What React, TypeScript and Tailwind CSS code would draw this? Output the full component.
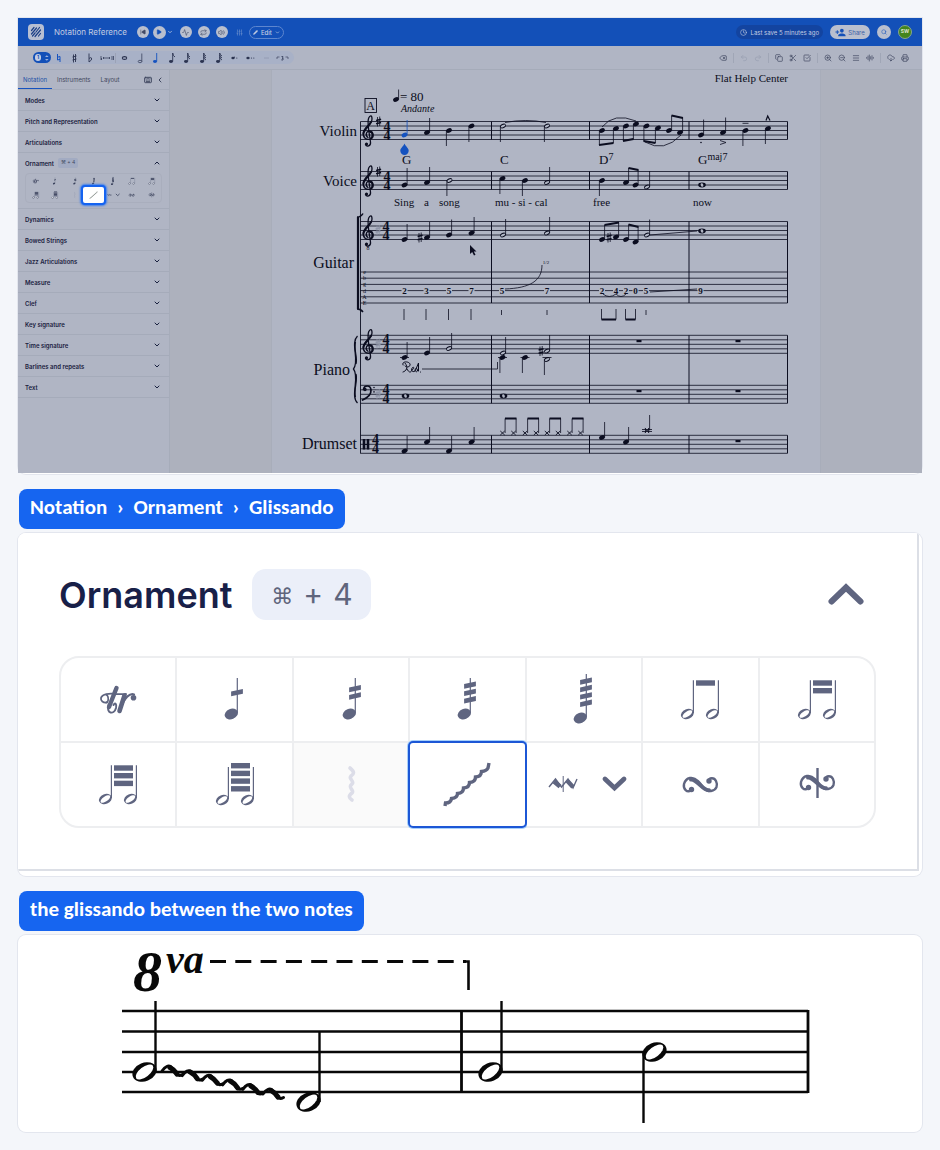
import React from "react";
import {
  Activity, AudioLines, CheckSquare, ChevronDown, ChevronLeft, ChevronUp, Clock, CloudDownload, Copy, Delete, Keyboard,
  Menu, Pencil, Play, Printer, Redo2, Repeat, Scissors, Search, SkipBack, SlidersVertical, Undo2, Volume2, ZoomIn, ZoomOut,
} from "lucide-react";
import { MdPersonAddAlt1 } from "react-icons/md";

const INK = "#0b0d20";

/* ---------- ornament icons, drawn around the centre of a 116 x 84 cell ---------- */

function Stemmed({ dx = 0, slashes, top = -21, headY = 15 }: { dx?: number; slashes: number[]; top?: number; headY?: number }) {
  return (
    <g>
      <ellipse cx={-3.7 + dx} cy={headY} rx="6.8" ry="5.1" transform={`rotate(-22 ${-3.7 + dx} ${headY})`} />
      <path d={`M${2.3 + dx} ${top}V${headY - 1}`} stroke="currentColor" strokeWidth="1.2" />
      {slashes.map((y) => (
        <path key={y} d={`M${-3.9 + dx} ${y - 1}l11.8 -2.6v4.8l-11.8 2.6z`} />
      ))}
    </g>
  );
}

function Beamed({ count, top = -18.7, headY = 15, stemTop = -18.7 }: { count: number; top?: number; headY?: number; stemTop?: number }) {
  return (
    <g>
      {[-12.6, 12.4].map((x) => (
        <g key={x}>
          <ellipse cx={x} cy={headY} rx="6.6" ry="4.9" transform={`rotate(-22 ${x} ${headY})`} />
          <ellipse cx={x} cy={headY} rx="5.6" ry="2.5" fill="#fff" transform={`rotate(-34 ${x} ${headY})`} />
          <path d={`M${x + 6} ${stemTop}V${headY - 1}`} stroke="currentColor" strokeWidth="1.2" />
        </g>
      ))}
      {Array.from({ length: count }, (_, i) => (
        <rect key={i} x="-4" y={top + i * 7.7} width="19" height="5.4" />
      ))}
    </g>
  );
}

const turn = (
  <g fill="none" stroke="currentColor" strokeLinecap="round">
    <path d="M-9 6.500C-13 9 -17 5 -16 0C-14 -7 -7 -8 -2 -3C3 2 5 8 11 7C17 6 18 1 16 -3C14 -7 9 -6 9 -3.500" strokeWidth="2.4" />
    <path d="M-9 -4.500C-3 -5 3 7 9 6.200" strokeWidth="4" />
    <circle cx="-8.500" cy="5.500" r="1.400" strokeWidth="2.600" />
    <circle cx="9" cy="-3" r="1.400" strokeWidth="2.600" />
  </g>
);

const ornaments: { name: string; art: React.ReactNode }[] = [
  {
    name: "Trill",
    art: (
      <g fill="none" stroke="currentColor" strokeLinecap="round" strokeLinejoin="round">
        <path d="M-1.500 -11L-9 8" strokeWidth="4.400" />
        <path d="M-9.500 6C-12 15 -4 16 -2 9C-1 5 -3 3 -4.500 6" strokeWidth="2" />
        <path d="M-11 3.500C-15 4 -17.500 2 -17 -1C-16 -5 -8 -6 -3 -5C2 -4.500 6 -5 8 -5" strokeWidth="1.800" />
        <path d="M-12 -4.500C-9 -3 -9 3 -12 3.500" strokeWidth="1.600" />
        <path d="M6.500 -3.500L1.500 12" strokeWidth="4.600" />
        <path d="M4 5C8 -2 12 -6 16 -4.500" strokeWidth="2.200" />
        <circle cx="15.500" cy="-1.200" r="2.800" fill="currentColor" stroke="none" />
      </g>
    ),
  },
  { name: "Tremolo", art: <Stemmed slashes={[-6.5]} /> },
  { name: "Double tremolo", art: <Stemmed dx={2} slashes={[-10.5, -3.1]} /> },
  { name: "Triple tremolo", art: <Stemmed slashes={[-14, -6.7, 0.7]} /> },
  { name: "Quadruple tremolo", art: <Stemmed slashes={[-18, -10.6, -3.2, 4.2]} top={-25} headY={19} /> },
  { name: "Tremolo between notes", art: <Beamed count={1} /> },
  { name: "Double tremolo between notes", art: <Beamed count={2} /> },
  { name: "Triple tremolo between notes", art: <Beamed count={3} /> },
  { name: "Quadruple tremolo between notes", art: <Beamed count={4} top={-21} headY={16} stemTop={-17} /> },
  {
    name: "Arpeggio",
    art: (
      <path
        d="M-1 -16C4 -12 3 -10 0 -8C-3 -5 4 -3 1 0C-4 4 4 6 1 9C-3 12 -2 14 1 16"
        fill="none" stroke="currentColor" strokeWidth="3.6" strokeLinecap="round"
      />
    ),
  },
  {
    name: "Glissando",
    art: (
      <path
        d="M-23 22L-22.500 19Q-17 19 -16.500 14.500Q-10.500 14 -10.500 9.500Q-4.500 9 -4.500 4Q1.500 3.500 1.500 -1.500Q7.500 -2 7.500 -7Q13.500 -7.500 13.500 -12.500Q18.500 -13 20 -16L21 -21"
        fill="none" stroke="currentColor" strokeWidth="3.4"
      />
    ),
  },
  {
    name: "Mordent",
    art: (
      <g>
        <path d="M-35 3L-28.500 -5L-22.500 3L-16 -5L-11 4L-7 -5" fill="none" stroke="currentColor" strokeWidth="1.4" />
        <path d="M-30 -2.500L-24 2.500M-17 -3.500L-11 3" fill="none" stroke="currentColor" strokeWidth="4.4" />
        <path d="M-20.800 -8V8" stroke="currentColor" strokeWidth="1" />
        <path d="M21 -5L30.500 4L40 -5" fill="none" stroke="currentColor" strokeWidth="4.8" strokeLinecap="round" />
      </g>
    ),
  },
  { name: "Turn", art: turn },
  { name: "Slashed turn", art: <g><g transform="translate(0 -2)">{turn}</g><path d="M.5 -16V14" stroke="currentColor" strokeWidth="2.4" /></g> },
];

function OrnamentArt({ art }: { art: React.ReactNode }) {
  return (
    <svg viewBox="-58 -42 116 84" className="h-full w-full" fill="currentColor" aria-hidden="true">
      {art}
    </svg>
  );
}

/* ---------- score drawing ---------- */

type Kind = "q" | "h" | "w" | "x";

function Note({ x, y, kind = "q", end, color = INK }: { x: number; y: number; kind?: Kind; end?: number; color?: string }) {
  const up = end !== undefined && end < y;
  const sx = up ? x + 2.6 : x - 2.6;
  return (
    <g>
      {kind === "x" ? (
        <path d={`M${x - 2.2} ${y - 2}l4.400 4M${x - 2.2} ${y + 2}l4.400 -4`} stroke={color} strokeWidth=".9" />
      ) : kind === "w" ? (
        <g>
          <ellipse cx={x} cy={y} rx="3.8" ry="2.4" fill={color} />
          <ellipse cx={x} cy={y} rx="1.300" ry="1.900" fill="#b0b5c4" transform={`rotate(-20 ${x} ${y})`} />
        </g>
      ) : (
        <g transform={`rotate(-24 ${x} ${y})`}>
          <ellipse cx={x} cy={y} rx="3" ry="2.2" fill={color} />
          {kind === "h" && <ellipse cx={x} cy={y} rx="2.400" ry="1" fill="#b0b5c4" />}
        </g>
      )}
      {end !== undefined && <path d={`M${sx} ${y}V${end}`} stroke={color} strokeWidth=".8" />}
    </g>
  );
}

function Clef({ y }: { y: number }) {
  return (
    <g transform={`translate(368.500 ${y})`} fill="none" stroke={INK} strokeLinecap="round">
      <path d="M-.5 2.500C-3.500 .5 -2.500 -3.800 1 -3.800C5 -3.800 6 2.500 2 4C-2 5.500 -6 2.500 -5.200 -2.500C-4.200 -8 3.500 -10 3.500 -16C3.500 -20 1.500 -20 .2 -17C-1 -14 -.5 -10 .2 -5L2 7C2.500 11.500 -2 12 -3 9.500" strokeWidth="1.3" />
      <path d="M-5 -1.500C-4.500 -6 .5 -9 2.500 -13M1.500 -3.300C4.500 -3 5 1.500 2.500 3.500" strokeWidth="2" />
      <circle cx="-2" cy="9" r="1.600" fill={INK} stroke="none" />
    </g>
  );
}

const Sharp = ({ x, y, faint = false }: { x: number; y: number; faint?: boolean }) => (
  <g stroke={faint ? "#8f95a8" : INK} strokeWidth=".8">
    <path d={`M${x - 1} ${y - 4.500}v9.500M${x + 1.200} ${y - 5}v9.500`} />
    <path d={`M${x - 2.400} ${y - 1}l5 -1.200M${x - 2.400} ${y + 2.200}l5 -1.200`} strokeWidth="1.500" />
  </g>
);

const TimeSig = ({ x, y }: { x: number; y: number }) => (
  <text y={y + 9} fill={INK} fontSize="14" fontWeight="700" textAnchor="middle">
    <tspan x={x}>4</tspan>
    <tspan x={x} dy="9">4</tspan>
  </text>
);

const Staff = ({ y, lines = 5, gap = 4.5 }: { y: number; lines?: number; gap?: number }) => (
  <path d={Array.from({ length: lines }, (_, i) => `M360.500 ${y + i * gap}H787.500`).join("")} stroke={INK} strokeWidth=".8" />
);

const bars = [491.5, 589.5, 689, 787.5];
const barSpans = [[121.5, 139.5], [171.5, 189.5], [221.5, 303], [335.3, 403.3], [435.3, 453.3]];
const notes: [number, number, Kind, number?][] = [
  [427, 132.5, "q", 118], [449, 130.5, "q", 146], [471.5, 126, "q", 142], [503, 126, "h", 142], [547, 126, "h", 142],
  [602, 130.5, "q", 145], [616, 128.5, "q", 143], [626, 126, "q", 141], [636, 124, "q", 139], [646.5, 126, "q", 141],
  [658, 128, "q", 143], [669, 130.5, "q", 115.5], [680, 132.5, "q", 118], [701, 135, "q", 119.5], [723, 132.5, "q", 117.5],
  [745.5, 130.5, "q", 146], [768, 128.5, "q", 144],
  [404.5, 185, "q", 168], [427, 182.5, "q", 167], [449.5, 180.5, "h", 196], [502.5, 178.5, "q", 194], [525, 180.5, "q", 196],
  [547, 182.5, "h", 167], [602, 180.5, "q", 196], [626, 182.5, "q", 168], [635.5, 185, "q", 170], [647, 187, "h", 171], [702, 185, "w"],
  [404.5, 239.5, "q", 224], [427, 237.5, "q", 222], [449, 235, "q", 219.5], [471.5, 233, "q", 217], [503, 235, "h", 219],
  [547, 233, "h", 217], [602, 239.5, "q", 225], [616, 237, "q", 222.5], [626, 239.5, "q", 224.5], [635.5, 242, "q", 227],
  [647, 235, "h", 219.5], [702, 231, "w"],
  [404.5, 357.5, "q", 342], [427, 353, "q", 337], [449, 348.5, "h", 333], [503, 353, "h", 337], [502.5, 357.5, "q", 373],
  [525, 357.5, "q", 373], [547, 351, "h", 335], [547, 359.5, "h", 375], [405.5, 396, "w"], [503.5, 396, "w"],
  [404.5, 451, "q", 436], [427, 442, "q", 427], [449, 451, "q", 436], [471.5, 442, "q", 427],
  [502.5, 433, "x", 418.5], [513.5, 433, "x", 418.5], [525, 433, "x", 418.5], [536, 433, "x", 418.5],
  [547, 433, "x", 418.5], [558, 433, "x", 418.5], [569.5, 433, "x", 418.5], [580.5, 433, "x", 418.5],
  [602, 437.5, "q", 422], [626, 442, "q", 427], [647, 430.5, "x", 415],
];
const frets: [number, string][] = [
  [404.5, "2"], [426.5, "3"], [449, "5"], [471.5, "7"], [502, "5"], [547, "7"],
  [602, "2"], [616, "4"], [626, "2"], [635.5, "0"], [646, "5"], [700.5, "9"],
];
const lyrics: [number, string][] = [[394, "Sing"], [424, "a"], [439, "song"], [495, "mu - si - cal"], [593, "free"], [693, "now"]];
const parts: [number, number, string][] = [[357, 136, "Violin"], [357, 186, "Voice"], [354, 268, "Guitar"], [350, 375, "Piano"], [357, 449, "Drumset"]];
const openStrings = ["e", "b", "g", "d", "A", "E"];

function Score() {
  return (
    <svg viewBox="272 70 548 403" className="block w-full font-['Liberation_Serif',serif]" fill={INK} role="img" aria-label="Score">
      <text x="788" y="82" fontSize="11" textAnchor="end">Flat Help Center</text>
      <rect x="365" y="98.500" width="11.500" height="14" fill="none" stroke={INK} strokeWidth=".9" />
      <text x="370.700" y="110" fontSize="12" textAnchor="middle">A</text>
      <Note x={396} y={99.5} end={89.5} />
      <text x="400" y="101" fontSize="13">= 80</text>
      <text x="401" y="112" fontSize="10" fontStyle="italic">Andante</text>
      {parts.map(([x, y, name], i) => (
        <text key={name} x={x} y={y} fontSize={i < 2 ? 15 : 16} textAnchor="end">{name}</text>
      ))}

      <Staff y={121.5} />
      <Staff y={171.5} />
      <Staff y={221.5} />
      <Staff y={272} lines={6} gap={6.2} />
      <Staff y={335.3} />
      <Staff y={385.3} />
      <Staff y={435.3} />
      <path d="M360.500 121.500V453.500" stroke={INK} strokeWidth=".9" />
      {bars.map((x) => (
        <path key={x} d={barSpans.map(([a, b]) => `M${x} ${a}V${b}`).join("")} stroke={INK} strokeWidth="1" />
      ))}

      <Clef y={135} />
      <Clef y={185} />
      <Clef y={235} />
      <Clef y={348.8} />
      <text x="368" y="250" fontSize="6" textAnchor="middle">8</text>
      <g fill="none" stroke={INK} strokeLinecap="round">
        <path d="M363.500 389.500C364 385 370.500 384.500 371 390C371.300 395 367 398 362.500 400" strokeWidth="1.700" />
        <circle cx="365" cy="389.500" r="1" strokeWidth="1.400" />
        <path d="M374 387.500v.1M374 391.800v.1" strokeWidth="1.500" />
      </g>
      <path d="M364 439v10.500M368 439v10.500" stroke={INK} strokeWidth="2.600" />
      <path d="M364 444.500h4" stroke={INK} strokeWidth="1" />
      <Sharp x={378.5} y={121.5} />
      <Sharp x={378.5} y={171.5} />
      <Sharp x={378} y={230} faint />
      <Sharp x={378} y={343.5} faint />
      <Sharp x={378} y={394} faint />
      {[[387, 121.5], [387, 171.5], [386, 221.5], [386, 335.3], [386, 385.3], [375.5, 435.3]].map(([x, y]) => (
        <TimeSig key={y} x={x} y={y} />
      ))}
      <g fill="none" stroke={INK}>
        <path d="M358 217V309" strokeWidth="2.200" />
        <path d="M357 217Q361 217 363 213.500M357 309Q361 309 363 312" strokeWidth="1.500" />
        <path d="M357.500 336C350 343 360 361 353.500 369C360 377 350 396 357.500 403" strokeWidth="1.300" />
        <path d="M355.500 342C353.500 350 358 358 356 364M356 374C358 381 353.500 389 355.500 397" strokeWidth="1.200" />
      </g>

      {notes.map(([x, y, kind, end], i) => (
        <Note key={i} x={x} y={y} kind={kind} end={end} />
      ))}
      <Note x={404.5} y={135} end={120} color="#1552bf" />
      <path d="M404.500 143.500C406 147 408.700 148 408.700 150.800A4.200 4.200 0 0 1 400.300 150.800C400.300 148 403 147 404.500 143.500Z" fill="#1552bf" />
      <Sharp x={420} y={237.5} />
      <Sharp x={609} y={237.5} />
      <Sharp x={541} y={351} />

      <g fill="none" stroke={INK} strokeWidth="2">
        <path d="M599 145L613.500 143M623 141L633.500 139M643.500 141L655.500 143M671.500 115.500L683 118" />
        <path d="M628.500 168L638.500 170M604.500 225L619 222.500M628.500 224.500L638.500 227" />
        <path d="M601.500 319.500H616M625.500 319.500H635.500" />
        <path d="M505 418.500h11.500M527.500 418.500h11.500M549.500 418.500h11.500M572 418.500h11.500" />
      </g>
      <g fill="none" stroke={INK} strokeWidth=".8">
        <path d="M505 122.500Q526 118.500 546 122.500M602 127Q614 112 636 121M645 142Q664 153 681 135" />
        <path d="M720 140.500l6 2l-6 2M742.500 123.300h6" />
        <path d="M650 235L697 231M505 289C530 288 542 281 542 265M603 294Q609 299 616 294Q621 299 626 294M650 292L697 289" />
        <path d="M404 309v11M426 309v11M448.500 309v11M471 309v11M501.500 310v5M547 310v5M646 310v5" />
        <path d="M601.500 309v10.500M616 309v10.500M625.500 309v10.500M635.500 309v10.500" />
        <path d="M400 357.500h9M498 357.500h9M520.500 357.500h9M542.500 357.500h9" />
        <path d="M642 429.500h10M642 431.500h10M645.500 428v5M648.500 428v5" />
        <path d="M422 369H497.500V362" />
      </g>
      <path d="M766 120.500L767.700 116L770 120.500" fill="none" stroke={INK} strokeWidth="1.200" />
      <circle cx="701" cy="142.500" r=".8" />
      {[[639, 340], [738, 340], [639, 390], [738, 390], [738, 440]].map(([x, y]) => (
        <rect key={`${x}-${y}`} x={x - 2.5} y={y} width="5" height="2.200" />
      ))}
      <g fill="none" stroke={INK} strokeWidth="1" strokeLinecap="round">
        <path d="M403 365C401 361 409 361 410 364C411 367 406 368 405 366M405 363C409 368 406 371 403 372M407 369C409 373 411 373 412 370" />
        <path d="M412 369.500C415 369 414 366.500 412.500 367.500C410.500 369.500 412 373 415 371C415 367 418 368 417.500 371C416 373 415 371 416 369L418.500 363V371M420.500 372v.1" />
      </g>

      <g fontSize="13">
        <text x="402" y="163.500">G</text>
        <text x="500" y="163.500">C</text>
        <text x="599" y="163.500">D<tspan dy="-4" fontSize="10">7</tspan></text>
        <text x="698" y="163.500">G<tspan dy="-4" fontSize="10">maj7</tspan></text>
      </g>
      {lyrics.map(([x, word]) => (
        <text key={x} x={x} y="205.500" fontSize="11">{word}</text>
      ))}
      {openStrings.map((s, i) => (
        <text key={s} x="364.500" y={274 + i * 6.2} fontSize="6" textAnchor="middle">{s}</text>
      ))}
      {frets.map(([x, n]) => (
        <g key={x}>
          <rect x={x - 3} y="288" width="6" height="5" fill="#b0b5c4" />
          <text x={x} y="293.500" fontSize="9" fontWeight="700" textAnchor="middle">{n}</text>
        </g>
      ))}
      <text x="546" y="264" fontSize="5" textAnchor="middle">1/2</text>
      <path d="M470 245v9l2.200 -2l1.800 3.500l1.500 -.8l-1.700 -3.200h2.700z" />
    </svg>
  );
}

/* ---------- editor ---------- */

const iconBtn = "flex shrink-0 items-center justify-center";

function Glyph({ children }: { children: React.ReactNode }) {
  return (
    <svg viewBox="0 0 15 12" className="mx-auto h-3 w-[15px]" fill="currentColor" stroke="none" aria-hidden="true">
      {children}
    </svg>
  );
}

const flagged = (n: number) => (
  <g>
    <ellipse cx="6" cy="9.500" rx="2" ry="1.400" />
    <path d={"M7.700 9.500V1" + ["", "Q8 4 10 5", "Q8 4 10 5M7.700 3.500Q8 6 10 7", "M7.700 1Q8 3 10 4M7.700 3Q8 5 10 6M7.700 5Q8 7 10 8"][n]} fill="none" stroke="currentColor" strokeWidth=".9" />
  </g>
);

const noteTools: { name: string; art: React.ReactNode; tone?: string }[] = [
  { name: "Natural", art: <path d="M6.500 2v6l2.500 -.7M9 10V4.500l-2.500 .7" fill="none" stroke="currentColor" />, tone: "text-[#1552bf]" },
  { name: "Sharp", art: <path d="M6.500 2.500v8M8.500 2v8M5.500 5l4 -1M5.500 8l4 -1" fill="none" stroke="currentColor" strokeWidth=".9" /> },
  { name: "Flat", art: <path d="M6 1.500v8.500Q9.500 8 8.500 6Q7.500 5 6 6.500" fill="none" stroke="currentColor" strokeWidth=".9" /> },
  { name: "Accidental range", art: <path d="M2 4v4Q4 7 2 6M4 6h7M5 5l-1 1l1 1M10 5l1 1l-1 1M13 4v4M14.500 4v4" fill="none" stroke="currentColor" strokeWidth=".7" /> },
  { name: "Whole note", art: <ellipse cx="7.500" cy="6" rx="2.200" ry="1.400" fill="none" stroke="currentColor" strokeWidth="1.100" /> },
  { name: "Half note", art: <g fill="none" stroke="currentColor" strokeWidth=".7"><ellipse cx="7" cy="9.500" rx="1.800" ry="1.200" /><path d="M8.800 9.500V1.500" /></g> },
  { name: "Quarter note", art: flagged(0), tone: "text-[#1552bf]" },
  { name: "Eighth note", art: flagged(1) },
  { name: "Sixteenth note", art: flagged(2) },
  { name: "Thirty-second note", art: flagged(3) },
  { name: "Sixty-fourth note", art: flagged(3) },
  { name: "Dot", art: <g><ellipse cx="6" cy="6" rx="1.700" ry="1.200" /><path d="M7.500 6V4.500" stroke="currentColor" strokeWidth=".6" /><circle cx="9.800" cy="6" r=".6" /></g> },
  { name: "Double dot", art: <g><ellipse cx="5" cy="6" rx="1.700" ry="1.200" /><circle cx="8.500" cy="6" r=".6" /><circle cx="10.800" cy="6" r=".6" /></g> },
  { name: "Rest", art: <path d="M5 6h5" stroke="#8f98b0" strokeWidth=".8" /> },
  { name: "Tuplet", art: <g><path d="M2 7V5h2.500M10.500 5H13v2" fill="none" stroke="currentColor" strokeWidth=".6" /><path d="M6.500 4.500q2 -.5 1.500 1q-.5 .6 -1 .5q2 .3 1 1.800q-1 .6 -1.700 0" fill="none" stroke="currentColor" strokeWidth=".8" /></g> },
];

const editTools = [
  [{ name: "Delete", Icon: Delete }],
  [{ name: "Undo", Icon: Undo2, off: true }, { name: "Redo", Icon: Redo2, off: true }],
  [{ name: "Copy", Icon: Copy }, { name: "Cut", Icon: Scissors }, { name: "Paste", Icon: CheckSquare }],
  [{ name: "Zoom in", Icon: ZoomIn }, { name: "Zoom out", Icon: ZoomOut }, { name: "Page view", Icon: Menu }, { name: "Concert pitch", Icon: AudioLines }],
  [{ name: "Export", Icon: CloudDownload }, { name: "Print", Icon: Printer }],
];

const players = [
  { name: "Metronome", Icon: Activity },
  { name: "Loop", Icon: Repeat },
  { name: "Volume", Icon: Volume2 },
];

const sectionsAbove = ["Modes", "Pitch and Representation", "Articulations"];
const sectionsBelow = [
  "Dynamics", "Bowed Strings", "Jazz Articulations", "Measure", "Clef", "Key signature", "Time signature", "Barlines and repeats", "Text",
];

function Section({ label }: { label: string }) {
  return (
    <button type="button" className="flex h-[21px] w-full items-center justify-between border-b border-[#a5abba] pr-2 pl-[7px] text-left">
      {label}
      <ChevronDown className="size-2" strokeWidth={3} />
    </button>
  );
}

function Sidebar() {
  return (
    <aside className="w-[152px] shrink-0 border-r border-[#a6acba] bg-[#b0b5c4] text-[6px] font-semibold text-[#1a2140]">
      <div className="flex h-5 items-stretch border-b border-[#a5abba] pr-1 font-normal text-[#3f4760]">
        <button type="button" className="border-b border-[#1552bf] px-[5px] text-[#1c4fa6]">Notation</button>
        <button type="button" className="px-[5px]">Instruments</button>
        <button type="button" className="px-[5px]">Layout</button>
        <button type="button" aria-label="Keyboard shortcuts" className="ml-auto px-[3px]"><Keyboard className="size-2" strokeWidth={3} /></button>
        <button type="button" aria-label="Collapse panel" className="px-px"><ChevronLeft className="size-2" strokeWidth={3} /></button>
      </div>
      {sectionsAbove.map((s) => <Section key={s} label={s} />)}
      <div className="h-14 border-b border-[#a5abba]">
        <button type="button" className="flex h-5 w-full items-center pr-2 pl-[7px]">
          Ornament
          <span className="ml-1 rounded-xs bg-[#a2abc2] px-[3px] py-px text-[5px] font-normal text-[#3f4760]">⌘ + 4</span>
          <ChevronUp className="ml-auto size-2" strokeWidth={3} />
        </button>
        <div className="ml-[7px] grid w-[137px] grid-cols-7 rounded-sm border border-[#a9aebd] text-[#3a415c]">
          {ornaments.map((o) => (
            <button
              key={o.name}
              type="button"
              aria-label={o.name}
              className={o.name === "Glissando" ? "relative h-[14px]" : o.name === "Arpeggio" ? "h-[14px] text-[#9ba1b3]" : "h-[14px]"}
            >
              {o.name === "Glissando" ? (
                <span className="absolute -inset-x-[3px] -inset-y-[3px] rounded-[4px] border-2 border-[#1563f0] bg-white p-px text-[#4c5a50] shadow-[0_0_2px_1px_#3f7fec]">
                  <OrnamentArt art={o.art} />
                </span>
              ) : (
                <OrnamentArt art={o.art} />
              )}
            </button>
          ))}
        </div>
      </div>
      {sectionsBelow.map((s) => <Section key={s} label={s} />)}
    </aside>
  );
}

function Editor() {
  const round = "flex size-3 items-center justify-center rounded-full bg-[#b9bfce] text-[#424a66]";
  return (
    <section className="overflow-hidden bg-[#adb1bd] font-['Inter',sans-serif]">
      <header className="flex h-[28px] items-center bg-[#1350b8] pl-[10px] pr-[10px] text-[#c3cde2]">
        <span className="flex size-4 items-center justify-center rounded-[4px] bg-[#b7bfd2]">
          <svg viewBox="0 0 12 12" className="size-3" stroke="#1c3f86" strokeWidth="1.200" strokeLinecap="round" fill="none" aria-hidden="true">
            <path d="M1.500 4.500L4 1.500M1.500 8L6.500 2M2.500 10L5 7M6 6L9.500 1.500M5 10.500L10.500 4M8.500 10L10.500 7.500" />
          </svg>
        </span>
        <h1 className="ml-[10px] text-[8px]">Notation Reference</h1>
        <div className="ml-[10px] flex items-center gap-1">
          <button type="button" aria-label="Back to start" className={round}><SkipBack className="size-[6px] fill-current" /></button>
          <button type="button" aria-label="Play" className="flex size-[13px] items-center justify-center rounded-full bg-[#b9bfce] text-[#1350b8]"><Play className="size-[6px] fill-current" /></button>
        </div>
        <ChevronDown className="ml-px size-[6px]" strokeWidth={3} />
        <div className="ml-[7px] flex items-center gap-[6px]">
          {players.map(({ name, Icon }) => (
            <button key={name} type="button" aria-label={name} className={round}><Icon className="size-[7px]" /></button>
          ))}
        </div>
        <button type="button" aria-label="Mixer" className="ml-2 text-[#7797d0]"><SlidersVertical className="size-[7px]" /></button>
        <button type="button" className="ml-[6px] flex h-[13px] w-[35px] items-center justify-center gap-[3px] rounded-full border border-[#5d86cf] text-[6px] font-medium">
          <Pencil className="size-[5px] fill-current" /> Edit <ChevronDown className="size-[5px]" strokeWidth={3} />
        </button>
        <div className="ml-auto flex items-center gap-[7px]">
          <span className="flex h-[14px] items-center gap-[3px] rounded-full bg-[#1344a0] px-1 text-[6px]">
            <Clock className="size-[7px]" /> Last save 5 minutes ago
          </span>
          <button type="button" className="flex h-[14px] w-[40px] items-center justify-center gap-[2px] rounded-full bg-[#b9bfce] text-[6px] text-[#3c5ea5]">
            <MdPersonAddAlt1 className="size-[11px] -scale-x-100 text-[#1350b8]" /> Share
          </button>
          <button type="button" aria-label="Search" className="flex size-[14px] items-center justify-center rounded-full bg-[#b9bfce] text-[#1350b8]"><Search className="size-[6px]" /></button>
          <span className="flex size-[14px] items-center justify-center rounded-full border border-[#86a58e] bg-[#43851d] text-[5px] font-bold text-[#dce4d2]">SW</span>
        </div>
      </header>

      <div className="flex h-6 items-center justify-between border-b border-[#a5abb9] bg-[#b0b5c4] pr-[13px] pl-[15px] text-[#2b3350]">
        <div className="flex h-[13px] w-[261px] items-center rounded-full bg-[#a8b1c7] pr-1">
          <button type="button" aria-label="Voice 1" className="flex h-[11px] w-[18px] items-center gap-1 rounded-full bg-[#1350b8] px-[2px]">
            <span className="flex size-[7px] items-center justify-center rounded-full bg-[#c3cde2] text-[5px] font-bold text-[#1350b8]">1</span>
            <svg viewBox="0 0 4 8" className="h-2 w-1" fill="#9db3dd" aria-hidden="true"><path d="M0 3l2 -2l2 2zM0 5l2 2l2 -2z" /></svg>
          </button>
          {noteTools.map((t, i) => (
            <React.Fragment key={t.name}>
              {i === 4 && <span className="mx-px h-[10px] w-px bg-[#9ba2b6]" />}
              <button type="button" aria-label={t.name} className={t.tone ? "min-w-0 flex-1 text-[#1552bf]" : "min-w-0 flex-1"}><Glyph>{t.art}</Glyph></button>
            </React.Fragment>
          ))}
        </div>
        <div className="flex items-center gap-[6px] text-[#3d445e]">
          {editTools.map((group, g) => (
            <React.Fragment key={g}>
              {g > 0 && <span className="h-[10px] w-px bg-[#a0a6b6]" />}
              <div className="flex gap-[6px]">
                {group.map(({ name, Icon, ...rest }) => (
                  <button key={name} type="button" aria-label={name} className={"off" in rest ? "text-[#979eb0]" : ""}><Icon className="size-2" /></button>
                ))}
              </div>
            </React.Fragment>
          ))}
        </div>
      </div>

      <div className="flex">
        <Sidebar />
        <div className="flex min-w-0 flex-1 justify-center">
          <div className="w-[550px] border-x border-[#a8adba] bg-[#b0b5c4]">
            <Score />
          </div>
        </div>
      </div>
    </section>
  );
}

/* ---------- enlarged ornament panel ---------- */

function OrnamentPanel() {
  return (
    <section className="mr-[3px] mb-[5px] border-r-2 border-b-2 border-[#dcdfe6] bg-white px-[41px] pt-9 pb-[41px] font-['Inter',sans-serif]">
      <div className="flex items-center pr-3">
        <h2 className="text-[36px] leading-[50px] font-semibold text-[#182048]">Ornament</h2>
        <kbd className="ml-5 flex h-[51px] w-[119px] items-center justify-center gap-[10px] rounded-[14px] bg-[#ebeff9] font-['Inter',sans-serif] text-[30px] text-[#5f657c]">
          <span className="pt-1 font-['DejaVu_Sans',sans-serif] text-[22px]">⌘</span><span>+</span><span>4</span>
        </kbd>
        <button type="button" aria-label="Collapse ornament" className="ml-auto text-[#5f6580]">
          <svg viewBox="0 0 36 24" className="h-6 w-9" fill="none" stroke="currentColor" strokeWidth="6" strokeLinecap="round" aria-hidden="true">
            <path d="M3.500 18.500L18 4.500L32.500 18.500" />
          </svg>
        </button>
      </div>
      <div className="mt-9 grid grid-cols-7 gap-[2px] rounded-[20px] border-2 border-[#edeef0] bg-[#edeef0] text-[#5f6580]">
        {ornaments.map((o, i) => {
          const corner = i === 0 ? "rounded-tl-[18px]" : i === 6 ? "rounded-tr-[18px]" : i === 7 ? "rounded-bl-[18px]" : i === 13 ? "rounded-br-[18px]" : "";
          const look =
            o.name === "Glissando" ? "bg-white rounded-[3px] ring-2 ring-[#1c57d6] shadow-[0_0_0_3px_#a8d0fb]"
            : o.name === "Arpeggio" ? "bg-[#fafafa] text-[#dcdde8]" : "bg-white";
          return (
            <button key={o.name} type="button" aria-label={o.name} disabled={o.name === "Arpeggio"} className={`${iconBtn} h-[83px] ${corner} ${look}`}>
              <svg viewBox="-58 -41 116 84" className="h-[84px] w-[116px] shrink-0" fill="currentColor" aria-hidden="true">{o.art}</svg>
            </button>
          );
        })}
      </div>
    </section>
  );
}

/* ---------- glissando close-up ---------- */

function HalfNote({ x, y, end }: { x: number; y: number; end: number }) {
  const sx = end < y ? x + 11 : x - 11;
  return (
    <g>
      <ellipse cx={x} cy={y} rx="12.500" ry="9.300" transform={`rotate(-22 ${x} ${y})`} />
      <ellipse cx={x} cy={y} rx="10.500" ry="5" fill="#fff" transform={`rotate(-38 ${x} ${y})`} />
      <path d={`M${sx} ${y}V${end}`} stroke="#080808" strokeWidth="2.400" />
    </g>
  );
}

const waves = [0, 1, 2, 3, 4, 5];

function Excerpt() {
  return (
    <svg viewBox="122 935 697 197" className="block w-full max-w-[697px] font-['Liberation_Serif',serif]" fill="#080808" role="img" aria-label="Two measures with a glissando">
      <text x="133" y="991" fontSize="58" fontWeight="700" fontStyle="italic">8</text>
      <text x="166" y="973" fontSize="40" fontWeight="700" fontStyle="italic">va</text>
      <path d="M210 961.500H466" stroke="#080808" strokeWidth="3" strokeDasharray="16 9.300" />
      <path d="M463 961.500H468.500V990" stroke="#080808" strokeWidth="2.600" fill="none" />
      <path d="M122 1011H808M122 1031.500H808M122 1052H808M122 1072H808M122 1092H808" stroke="#080808" strokeWidth="2.300" />
      <path d="M461.500 1010V1093M808 1010V1093" stroke="#080808" strokeWidth="2.800" />
      <HalfNote x={144.5} y={1072} end={1001} />
      <HalfNote x={308.5} y={1102} end={1032} />
      <HalfNote x={490.5} y={1072} end={1001} />
      <HalfNote x={654.5} y={1052} end={1123} />
      <g fill="none" stroke="#080808" strokeLinecap="round" strokeLinejoin="round">
        {waves.map((i) => (
          <g key={i} transform={`translate(${i * 20.2} ${i * 4.6})`}>
            <path d="M162 1071Q167 1064 171 1067Q174 1070 175.500 1073Q178 1077 182.500 1074.500" strokeWidth="3" />
            <path d="M170 1067.500Q174 1069.500 177 1074" strokeWidth="5" />
          </g>
        ))}
      </g>
    </svg>
  );
}

function Caption({ children }: { children: React.ReactNode }) {
  return (
    <h2 className="ml-px w-fit rounded-lg bg-[#1665f0] px-[11px] pt-[2px] pb-[6px] font-['Carlito','Lato',sans-serif] text-[21px] leading-8 font-bold whitespace-pre text-white">
      {children}
    </h2>
  );
}

export default function App() {
  const card = "overflow-hidden rounded-lg bg-white shadow-[0_0_0_1px_#e3e6ee]";
  return (
    <main className="min-h-screen bg-[#f4f6fa] px-[18px] pt-[18px] pb-4">
      <div className="rounded-b-lg bg-white pb-px shadow-[0_0_0_1px_#e3e6ee]">
        <Editor />
      </div>
      <div className="pt-[15px] pb-1"><Caption>{"Notation  ›  Ornament  ›  Glissando"}</Caption></div>
      <div className={card}><OrnamentPanel /></div>
      <div className="pt-[15px] pb-1"><Caption>the glissando between the two notes</Caption></div>
      <div className={`${card} flex justify-center`}><Excerpt /></div>
    </main>
  );
}
